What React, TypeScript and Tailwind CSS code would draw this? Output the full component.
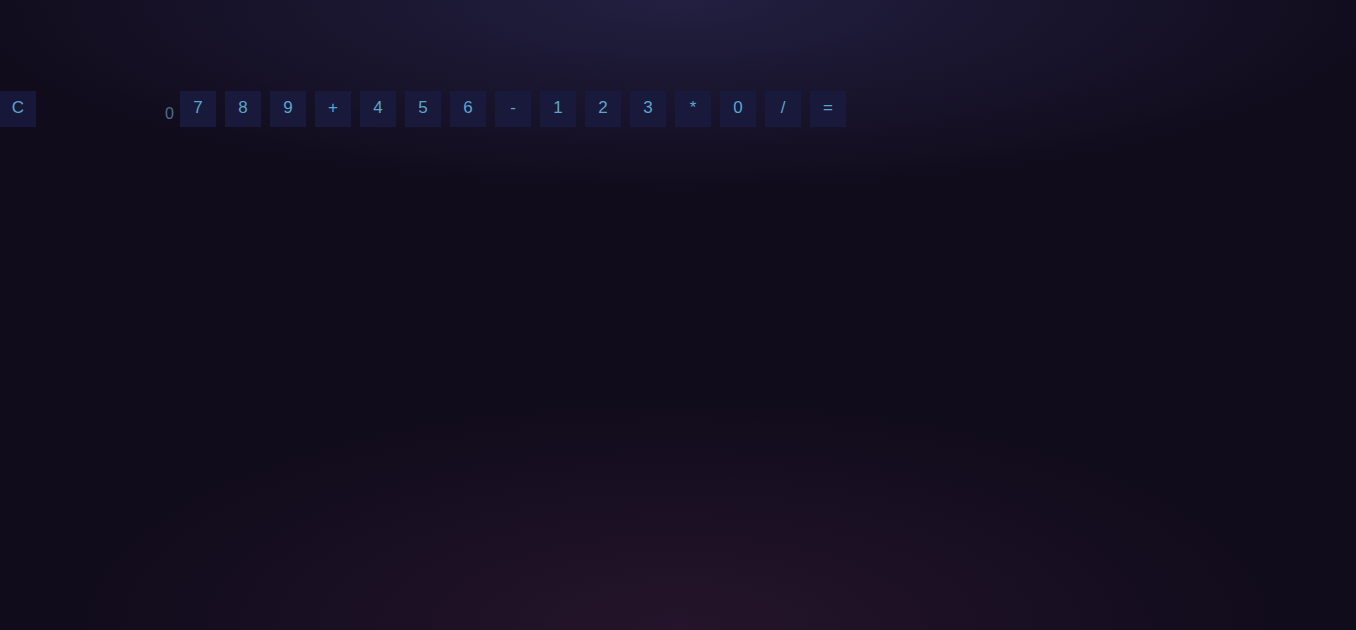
import React, { useState } from 'react';

const KEYS = ['7', '8', '9', '+', '4', '5', '6', '-', '1', '2', '3', '*', '0', '/', '='];

const App: React.FC = () => {
  const [display, setDisplay] = useState('0');

  const press = (k: string) => {
    if (k === '=') {
      try {
        // eslint-disable-next-line no-new-func
        setDisplay(String(Function(`return (${display})`)()));
      } catch {
        setDisplay('0');
      }
      return;
    }
    setDisplay((d) => (d === '0' ? k : d + k));
  };

  return (
    <div className="min-h-screen w-full bg-[#110c1c] bg-[image:radial-gradient(ellipse_52%_30%_at_50%_0%,#221f41_0%,rgba(17,12,28,0)_100%),radial-gradient(ellipse_44%_36%_at_50%_100%,#25142b_0%,rgba(17,12,28,0)_100%)] font-['Liberation_Sans',Arial,sans-serif] pt-[91px]">
      <div className="flex items-start">
        <button
          onClick={() => setDisplay('0')}
          className="w-9 h-9 pb-[2px] bg-[#17173a] text-[#5ba6ca] text-[17px] flex items-center justify-center"
        >
          C
        </button>
        <div className="w-[144px] pr-[6px] pt-[15px] text-right text-base leading-4 text-[#4e6f90]">
          {display}
        </div>
        <div className="flex gap-[9px]">
          {KEYS.map((k) => (
            <button
              key={k}
              onClick={() => press(k)}
              className="w-9 h-9 pb-[2px] bg-[#19193b] text-[#5ba6ca] text-[17px] flex items-center justify-center"
            >
              {k}
            </button>
          ))}
        </div>
      </div>
    </div>
  );
};

export default App;
